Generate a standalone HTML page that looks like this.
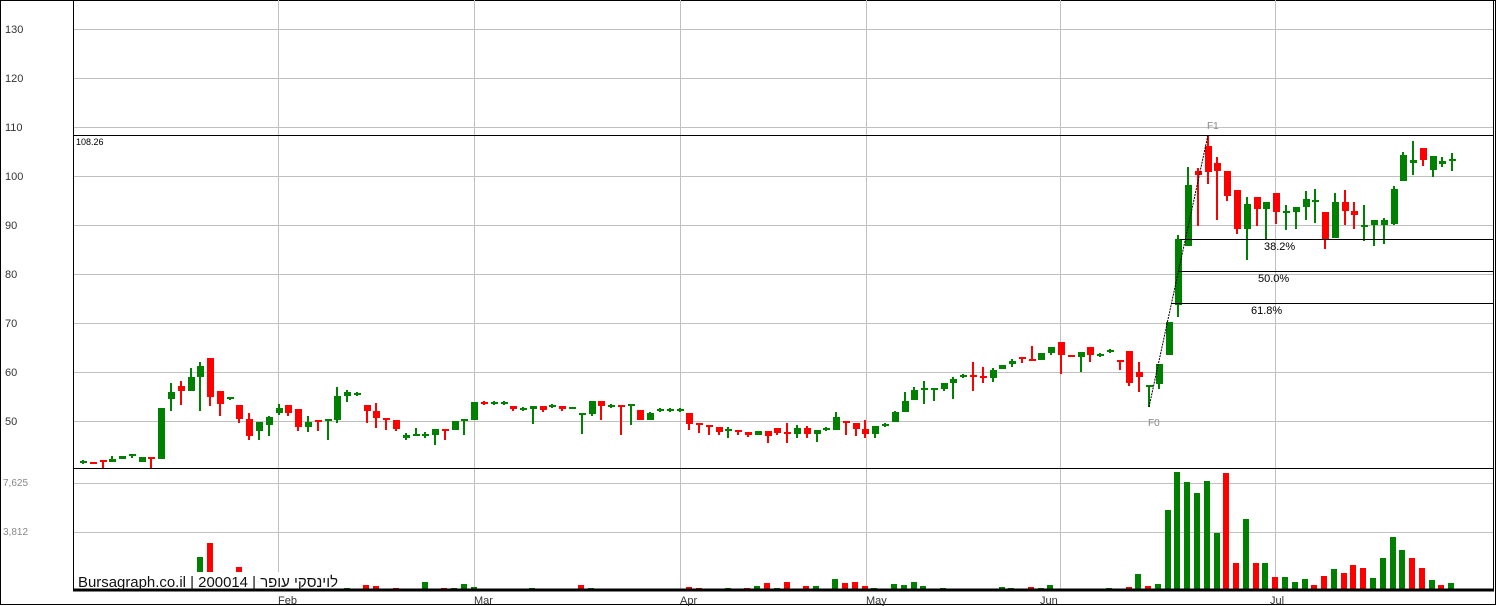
<!DOCTYPE html>
<html><head><meta charset="utf-8"><style>
html,body{margin:0;padding:0;background:#fff;}
body{width:1496px;height:606px;overflow:hidden;position:relative;font-family:"Liberation Sans","Noto Sans CJK JP",sans-serif;}
svg{position:absolute;left:0;top:0;}
</style></head><body>
<svg id="s" width="1496" height="606" xmlns="http://www.w3.org/2000/svg" font-family="Liberation Sans, DejaVu Sans, sans-serif">
<rect x="0.5" y="0.5" width="1495" height="604" fill="#fff" stroke="#000"/>
<g id="grid" stroke="#c0c0c0" stroke-width="1"></g>
<g id="cand"></g>
<g id="vol"></g>
<rect x="76" y="572" width="264" height="17" fill="#fff"/>
<g stroke="#000" stroke-width="1" fill="none">
<line x1="73.5" y1="0" x2="73.5" y2="591"/>
<line x1="1493.5" y1="0" x2="1493.5" y2="591"/>
<line x1="73" y1="468.5" x2="1494" y2="468.5"/>
<line x1="73" y1="590" x2="1494" y2="590" stroke-width="3"/>
<line x1="74" y1="135.5" x2="1494" y2="135.5"/>
<line x1="1180" y1="239.5" x2="1494" y2="239.5"/>
<line x1="1179" y1="271.5" x2="1494" y2="271.5"/>
<line x1="1171" y1="303.5" x2="1494" y2="303.5"/>
<line x1="1149" y1="407" x2="1208" y2="135" stroke-dasharray="2,1"/>
</g>
<g font-size="11" fill="#333">
<text x="5" y="33">130</text><text x="5" y="82">120</text><text x="5" y="131">110</text>
<text x="5" y="180">100</text><text x="5" y="229">90</text><text x="5" y="278">80</text>
<text x="5" y="327">70</text><text x="5" y="376">60</text><text x="5" y="425">50</text>
</g>
<g font-size="10" fill="#888"><text x="3" y="486">7,625</text><text x="3" y="535">3,812</text></g>
<text x="76" y="145" font-size="9" fill="#000">108.26</text>
<g font-size="11" fill="#000">
<text x="1264" y="250">38.2%</text><text x="1258" y="282">50.0%</text><text x="1251" y="314">61.8%</text>
</g>
<g font-size="10" fill="#888"><text x="1207" y="129">F1</text><text x="1148" y="426">F0</text></g>
<g font-size="11" fill="#333">
<text x="278" y="604">Feb</text><text x="474" y="604">Mar</text><text x="680" y="604">Apr</text>
<text x="866" y="604">May</text><text x="1040" y="604">Jun</text><text x="1270" y="604">Jul</text>
</g>
<text x="78" y="587" font-size="15" fill="#111" textLength="260" lengthAdjust="spacingAndGlyphs" font-family="Liberation Sans, Noto Sans CJK JP, sans-serif">Bursagraph.co.il | 200014 | לוינסקי עופר</text>
</svg>
<script>
var NS="http://www.w3.org/2000/svg";
function el(p,t,a){var e=document.createElementNS(NS,t);for(var k in a)e.setAttribute(k,a[k]);p.appendChild(e);return e;}
var g=document.getElementById('grid');
[29,78,127,176,225,274,323,372,421].forEach(function(y){el(g,'line',{x1:74,x2:1493,y1:y+.5,y2:y+.5});});
[483,532].forEach(function(y){el(g,'line',{x1:74,x2:1493,y1:y+.5,y2:y+.5});});
[278,474,680,866,1060,1275].forEach(function(x){el(g,'line',{x1:x+.5,x2:x+.5,y1:0,y2:590});});
var C=[
"g 462 462 460 464","r 462 464 462 464","r 461 462 461 469","g 459 462 456 462","g 456 459 456 459","g 455 455 455 458","g 457 462 457 462","r 457 459 457 468","g 408 459 408 459","g 392 399 383 411",
"r 386 391 381 405","g 377 391 368 391","g 366 377 362 411","r 358 397 358 406","r 391 404 391 416","g 398 398 397 400","r 405 419 405 423","r 419 436 413 440","g 422 431 422 440","g 417 425 416 436",
"g 408 413 404 415","r 405 413 405 416","r 409 427 409 431","g 422 427 416 432","r 421 421 421 431","g 420 420 420 440","g 396 420 387 423","g 392 396 390 402","g 394 394 392 396","r 405 411 405 423",
"r 411 418 403 428","r 418 420 418 430","r 420 429 420 431","g 435 438 433 440","g 435 435 428 436","g 435 435 432 438","g 429 435 429 445","r 429 431 429 440","g 421 430 421 430","g 420 420 420 435",
"g 402 420 402 420","r 403 403 401 405","g 403 403 401 405","g 403 403 401 405","r 406 409 406 411","g 409 409 407 411","g 406 409 406 424","r 406 410 406 412","g 406 406 404 408","r 406 409 406 411",
"g 408 408 408 408","g 414 414 414 434","g 401 414 401 416","r 401 406 401 420","g 406 406 404 408","r 406 406 406 435","g 405 405 405 425","r 410 420 410 420","g 413 420 412 420","g 410 410 408 412",
"g 410 410 408 412","g 410 410 408 412","r 413 424 413 430","r 424 424 424 433","r 425 427 425 435","r 427 432 427 435","g 430 431 427 438","r 430 432 430 435","r 432 435 432 437","g 431 435 431 435",
"r 431 436 431 443","r 428 433 428 435","r 433 433 423 443","g 428 434 425 438","r 428 434 426 438","g 430 434 430 442","g 429 429 427 431","g 417 430 412 430","r 422 422 422 435","r 423 429 423 436",
"r 429 434 420 438","g 426 434 426 438","g 425 425 423 427","g 412 422 411 422","g 401 412 392 412","g 390 400 387 400","g 389 389 381 404","g 389 389 389 401","g 383 389 383 391","g 379 383 377 399",
"g 376 376 374 378","r 376 376 362 391","r 376 378 367 383","g 370 378 368 382","g 365 369 365 369","g 361 364 359 367","r 358 358 358 363","r 359 361 346 361","g 353 360 353 360","g 347 353 347 355",
"r 342 355 342 374","r 356 356 355 357","g 352 357 352 372","r 347 355 347 362","g 355 355 353 357","g 351 351 349 353","r 361 361 361 370","r 351 383 351 386","r 372 377 362 392","g 386 386 386 407",
"g 364 384 364 389","g 322 355 322 355","g 239 305 235 317","g 185 246 167 246","r 171 175 168 226","r 146 172 135 184","r 163 171 157 220","r 171 196 171 201","r 190 229 190 234","g 204 229 197 260",
"r 197 209 197 226","g 202 209 202 239","r 193 212 193 224","g 212 212 205 230","g 207 212 207 229","g 199 207 191 220","g 201 201 189 223","r 212 239 212 249","g 202 238 193 238","r 202 211 190 225",
"r 211 215 202 229","g 225 227 205 241","g 220 225 220 246","g 220 225 218 244","g 189 224 186 225","g 155 181 152 181","g 160 163 141 175","r 148 160 148 166","g 156 170 156 177","g 161 164 157 167",
"g 160 160 153 171"];
var cg=document.getElementById('cand');
C.forEach(function(s,i){var p=s.split(' ');var col=p[0]=='g'?'#008000':'#ff0000';var t=+p[1],b=+p[2],h=+p[3],l=+p[4];
var x=Math.round(83+i*9.78);
el(cg,'rect',{x:x-1,y:h,width:2,height:Math.max(l-h,1),fill:col});
var bh=Math.max(b-t,2);el(cg,'rect',{x:x-3,y:(b-t<2?t-1:t),width:7,height:bh,fill:col});});
var V=[[200,557,'g'],[210,543,'r'],[239,567,'r'],[347,588,'g'],[366,585,'r'],[376,586,'r'],[386,589,'r'],[396,588,'r'],[405,589,'r'],[425,582,'g'],[435,589,'g'],[444,588,'r'],[454,588,'g'],[464,584,'g'],[474,587,'g'],
[532,588,'g'],[581,585,'r'],[591,588,'g'],[620,589,'r'],[630,589,'g'],[640,589,'r'],[689,587,'r'],[699,588,'r'],[709,589,'r'],[718,589,'r'],[728,588,'g'],[747,588,'r'],[757,586,'g'],[767,583,'r'],[777,588,'g'],[787,582,'r'],[796,589,'g'],[806,586,'r'],[816,586,'g'],[835,579,'g'],[845,583,'r'],[855,582,'r'],[865,586,'r'],[874,588,'g'],[884,589,'g'],[894,584,'g'],[904,585,'g'],[914,582,'g'],[923,586,'g'],[933,589,'g'],[943,588,'g'],[953,589,'g'],[973,589,'r'],[982,589,'r'],[992,589,'g'],[1002,587,'g'],[1011,588,'g'],[1021,589,'g'],[1031,587,'r'],[1041,588,'g'],[1050,585,'g'],[1070,589,'r'],[1080,589,'g'],[1099,589,'g'],[1109,588,'g'],[1120,589,'r'],
[1129,587,'r'],[1138,574,'g'],[1148,586,'r'],[1158,584,'g'],[1168,510,'g'],[1177,472,'g'],[1187,482,'g'],[1197,493,'g'],[1207,481,'g'],[1217,533,'g'],[1226,473,'r'],[1236,563,'r'],[1246,519,'g'],[1256,563,'r'],[1265,563,'g'],[1275,577,'r'],[1285,577,'g'],[1295,582,'g'],[1305,579,'g'],[1314,585,'r'],[1324,576,'r'],[1334,569,'g'],[1344,573,'r'],[1353,565,'r'],[1363,568,'r'],[1373,578,'g'],[1383,558,'g'],[1393,537,'g'],[1402,550,'g'],[1412,558,'r'],[1422,568,'r'],[1432,580,'g'],[1441,585,'r'],[1451,583,'g']];
var vg=document.getElementById('vol');
V.forEach(function(v){el(vg,'rect',{x:v[0]-3,y:v[1],width:6,height:589-v[1],fill:v[2]=='g'?'#008000':'#ff0000'});});
</script>
</body></html>
